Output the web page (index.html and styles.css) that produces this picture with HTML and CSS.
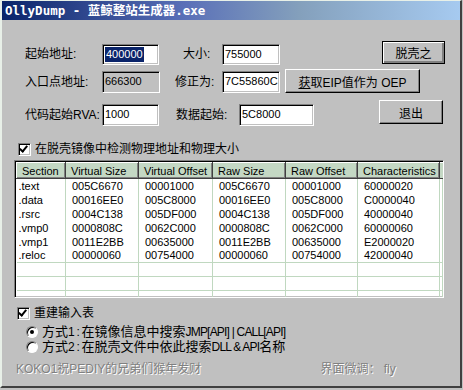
FILE: index.html
```html
<!DOCTYPE html>
<html lang="zh-CN">
<head>
    <meta charset="UTF-8" />
    <title>OllyDump</title>
    <link rel="stylesheet" href="styles.css">
</head>
<body>
    <div class="window">
        <div class="titlebar">OllyDump - 蓝鲸整站生成器.exe</div>

        <div class="row row-1">
            <div class="label label-start">起始地址:</div>
            <div class="field field-start"><span class="selected">400000</span></div>
            <div class="label label-size">大小:</div>
            <div class="field field-size">755000</div>
            <button class="btn btn-default btn-dump">脱壳之</button>
        </div>

        <div class="row row-2">
            <div class="label label-start">入口点地址:</div>
            <div class="field field-entry readonly">666300</div>
            <div class="label label-fix">修正为:</div>
            <div class="field field-size">7C55860C</div>
            <button class="btn btn-eip"><u>获</u>取EIP值作为 OEP</button>
        </div>

        <div class="row row-3">
            <div class="label label-start">代码起始RVA:</div>
            <div class="field field-start">1000</div>
            <div class="label label-data">数据起始:</div>
            <div class="field field-data">5C8000</div>
            <button class="btn btn-exit">退出</button>
        </div>

        <div class="check-row check-detect">
            <span class="checkbox checked"></span>
            <span>在脱壳镜像中检测物理地址和物理大小</span>
        </div>

        <div class="grid">
            <table>
                <colgroup>
                    <col class="c-sec"><col class="c-vs"><col class="c-vo">
                    <col class="c-rs"><col class="c-ro"><col class="c-ch"><col class="c-fill">
                </colgroup>
                <thead>
                    <tr>
                        <th>Section</th><th>Virtual Size</th><th>Virtual Offset</th>
                        <th>Raw Size</th><th>Raw Offset</th><th>Characteristics</th><th></th>
                    </tr>
                </thead>
                <tbody>
                    <tr><td>.text</td><td>005C6670</td><td>00001000</td><td>005C6670</td><td>00001000</td><td>60000020</td><td></td></tr>
                    <tr><td>.data</td><td>00016EE0</td><td>005C8000</td><td>00016EE0</td><td>005C8000</td><td>C0000040</td><td></td></tr>
                    <tr><td>.rsrc</td><td>0004C138</td><td>005DF000</td><td>0004C138</td><td>005DF000</td><td>40000040</td><td></td></tr>
                    <tr><td>.vmp0</td><td>0000808C</td><td>0062C000</td><td>0000808C</td><td>0062C000</td><td>60000060</td><td></td></tr>
                    <tr><td>.vmp1</td><td>0011E2BB</td><td>00635000</td><td>0011E2BB</td><td>00635000</td><td>E2000020</td><td></td></tr>
                    <tr class="lined"><td>.reloc</td><td>00000060</td><td>00754000</td><td>00000060</td><td>00754000</td><td>42000040</td><td></td></tr>
                    <tr class="lined"><td></td><td></td><td></td><td></td><td></td><td></td><td></td></tr>
                    <tr class="lined"><td></td><td></td><td></td><td></td><td></td><td></td><td></td></tr>
                    <tr class="lined"><td></td><td></td><td></td><td></td><td></td><td></td><td></td></tr>
                </tbody>
            </table>
        </div>

        <div class="check-row check-import">
            <span class="checkbox checked"></span>
            <span>重建输入表</span>
        </div>
        <div class="radio-row radio-1">
            <span class="radio checked"></span>
            <span class="option-text">方式<span class="lat">1 : </span>在镜像信息中搜索<span class="lat">JMP[API] | CALL[API]</span></span>
        </div>
        <div class="radio-row radio-2">
            <span class="radio"></span>
            <span class="option-text">方式<span class="lat">2 : </span>在脱壳文件中依此搜索<span class="lat">DLL &amp; API</span>名称</span>
        </div>

        <div class="footer">
            <span class="etched">KOKO1祝PEDIY的兄弟们猴年发财</span>
            <span class="etched credit">界面微调： fly</span>
        </div>
    </div>
</body>
</html>
```

FILE: styles.css
```css
/* Geral */
body {
    margin: 0;
    padding: 0;
    background-color: #c0c0c0;
    font-family: "Liberation Sans", "Noto Sans CJK SC", sans-serif;
    font-size: 12px;
    color: #000;
}

/* Janela */
.window {
    width: 462px;
    height: 388px;
    box-sizing: border-box;
    background-color: #c0c0c0;
    border-left: 2px solid #e8f0e8;
    border-top: 1px solid #e8f0e8;
    border-right: 2px solid #404040;
    border-bottom: 2px solid #404040;
    overflow: hidden;
}

.titlebar {
    height: 19px;
    line-height: 19px;
    padding-left: 3px;
    background: linear-gradient(to right, #0a246a 0%, #5a70b8 40%, #84a0bc 65%, #a6caf0 100%);
    color: #fff;
    font-family: "DejaVu Sans Mono", "Noto Sans CJK SC", monospace;
    font-weight: bold;
    font-size: 12.5px;
    white-space: nowrap;
}

/* Linhas do formulário */
.row {
    display: flex;
    align-items: flex-start;
    padding-left: 23px;
}

.row-1 { margin-top: 21px; height: 24px; }
.row-2 { margin-top: 4px; height: 24px; }
.row-3 { margin-top: 7px; height: 26px; }

.label {
    white-space: nowrap;
    line-height: 21px;
    margin-top: 3px;
}

.row-2 .label { margin-top: 2px; line-height: 22px; }
.row-3 .label { margin-top: 4px; line-height: 22px; }

.label-start { width: 77px; }
.label-size { width: 39px; margin-left: 24px; }
.label-fix { width: 47px; margin-left: 15px; }
.label-data { width: 63px; margin-left: 17px; }

/* Campos */
.field {
    box-sizing: border-box;
    height: 21px;
    margin-top: 3px;
    padding: 2px 0 0 2px;
    background-color: #fff;
    border: 1px solid;
    border-color: #808080 #fff #fff #808080;
    box-shadow: inset 1px 1px #000, inset -1px -1px #c0c0c0;
    font-size: 11px;
    line-height: 15px;
    white-space: nowrap;
    overflow: hidden;
}

.row-2 .field { height: 22px; margin-top: 2px; }
.row-3 .field { height: 22px; margin-top: 4px; }

.field-start { width: 57px; }
.field-entry { width: 58px; }
.field-size { width: 58px; }
.field-data { width: 75px; }

.field.readonly {
    background-color: #c0c0c0;
}

.selected {
    display: inline-block;
    background-color: #0a246a;
    color: #fff;
    padding: 0 1px;
}

/* Botões */
.btn {
    box-sizing: border-box;
    padding: 0;
    background-color: #c0c0c0;
    border: 1px solid;
    border-color: #fff #000 #000 #fff;
    box-shadow: inset -1px -1px #808080;
    font-family: "Liberation Sans", "Noto Sans CJK SC", sans-serif;
    font-size: 12px;
    color: #000;
    cursor: pointer;
}

.btn-default {
    border: 1px solid #000;
    box-shadow: inset 1px 1px #fff, inset -2px -2px #808080;
}

.btn-dump { width: 63px; height: 23px; margin-left: 102px; }
.btn-eip { width: 135px; height: 24px; margin-left: 5px; }
.btn-exit { width: 64px; height: 24px; margin-left: 65px; }

/* Checkbox e radio */
.check-row, .radio-row {
    display: flex;
    align-items: center;
    gap: 4px;
    height: 13px;
    line-height: 13px;
    white-space: nowrap;
}

.check-detect { margin-top: 17px; padding-left: 16px; }
.check-import { margin-top: 9px; padding-left: 15px; }
.radio-1 { margin-top: 5px; padding-left: 24px; }
.radio-2 { margin-top: 2px; padding-left: 24px; }

.option-text {
    font-size: 13px;
}

.option-text .lat {
    font-size: 12px;
    letter-spacing: -0.8px;
}

.checkbox {
    box-sizing: border-box;
    width: 13px;
    height: 13px;
    flex-shrink: 0;
    background-color: #fff;
    border: 1px solid;
    border-color: #808080 #fff #fff #808080;
    box-shadow: inset 1px 1px #000, inset -1px -1px #c0c0c0;
    position: relative;
}

.checkbox.checked::after {
    content: "";
    position: absolute;
    left: 2px;
    top: 0;
    width: 3px;
    height: 6px;
    border: solid #000;
    border-width: 0 2px 2px 0;
    transform: rotate(40deg);
}

.radio {
    box-sizing: border-box;
    width: 12px;
    height: 12px;
    flex-shrink: 0;
    border-radius: 50%;
    background-color: #fff;
    border: 1px solid;
    border-color: #808080 #fff #fff #808080;
    box-shadow: inset 1px 1px #000;
    position: relative;
}

.radio.checked::after {
    content: "";
    position: absolute;
    left: 3px;
    top: 3px;
    width: 4px;
    height: 4px;
    border-radius: 50%;
    background-color: #000;
}

/* Tabela de seções */
.grid {
    box-sizing: border-box;
    width: 430px;
    height: 138px;
    margin: 4px 0 0 12px;
    background-color: #fff;
    border: 1px solid;
    border-color: #808080 #fff #fff #808080;
    box-shadow: inset 1px 1px #000, inset -1px -1px #c0c0c0;
    padding: 1px;
    overflow: hidden;
}

.grid table {
    width: 426px;
    table-layout: fixed;
    border-collapse: collapse;
    font-size: 11px;
}

.c-sec { width: 49px; }
.c-vs { width: 73px; }
.c-vo { width: 74px; }
.c-rs { width: 73px; }
.c-ro { width: 72px; }
.c-ch { width: 82px; }
.c-fill { width: 3px; }

.grid th {
    box-sizing: border-box;
    height: 16px;
    padding: 0 0 0 5px;
    background-color: #c4d8c4;
    border-top: 1px solid #fff;
    border-left: 1px solid #fff;
    border-right: 1px solid #404040;
    border-bottom: 1px solid #404040;
    box-shadow: inset -1px -1px #808080;
    font-weight: normal;
    text-align: left;
    white-space: nowrap;
    overflow: hidden;
}

.grid th:last-child {
    border-right: none;
    box-shadow: none;
}

.grid td {
    height: 14px;
    padding: 0 0 0 6px;
    border-right: 1px solid #c0d8c0;
    line-height: 14px;
    white-space: nowrap;
    overflow: hidden;
}

.grid tr.lined td {
    height: 13px;
    line-height: 13px;
    border-bottom: 1px solid #c0d8c0;
}

.grid td:first-child {
    padding-left: 2px;
}

/* Rodapé */
.footer {
    display: flex;
    margin-top: 9px;
    padding-left: 14px;
    height: 14px;
    line-height: 14px;
    white-space: nowrap;
}

.etched {
    color: #808080;
    text-shadow: 1px 1px 0 #fff;
}

.credit {
    margin-left: 119px;
}
```
